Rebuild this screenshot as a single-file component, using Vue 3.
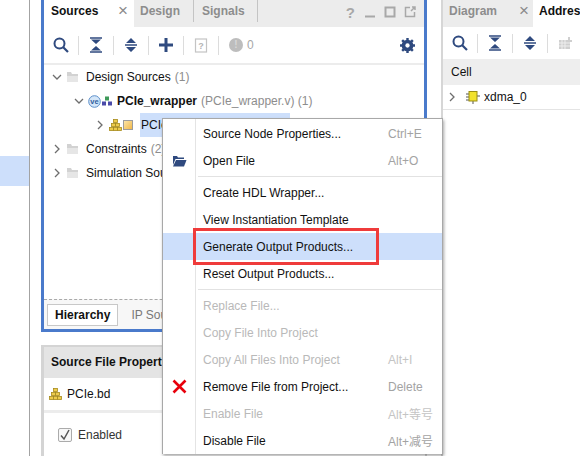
<script setup>
const iconBlue = '#2f4a7f'

const treeRows = [
  { label: 'Design Sources', note: '(1)', indent: 52, open: true, icon: 'folder' },
  { label: 'PCIe_wrapper', note: '(PCIe_wrapper.v) (1)', indent: 74, open: true, icon: 've', bold: true },
  { label: 'PCIe.bd', note: '', indent: 95, open: false, icon: 'bd', selected: true },
  { label: 'Constraints', note: '(2)', indent: 52, open: false, icon: 'folder' },
  { label: 'Simulation Sources', note: '(1)', indent: 52, open: false, icon: 'folder' },
]

const menuGroups = [
  [
    { label: 'Source Node Properties...', key: 'Ctrl+E' },
    { label: 'Open File', key: 'Alt+O', icon: 'open' },
  ],
  [
    { label: 'Create HDL Wrapper...' },
    { label: 'View Instantiation Template' },
    { label: 'Generate Output Products...', active: true },
    { label: 'Reset Output Products...' },
  ],
  [
    { label: 'Replace File...', off: true },
    { label: 'Copy File Into Project', off: true },
    { label: 'Copy All Files Into Project', key: 'Alt+I', off: true },
    { label: 'Remove File from Project...', key: 'Delete', icon: 'remove' },
    { label: 'Enable File', key: 'Alt+等号', off: true },
    { label: 'Disable File', key: 'Alt+减号' },
  ],
]

// little stack of blocks used for block design files
const stackCubes = [
  [4.5, 0.5], [2.5, 4.5], [6.5, 4.5], [0.5, 8.5], [4.5, 8.5], [8.5, 8.5],
]
</script>

<template>
  <div class="screen">
    <div class="strip">
      <div class="strip-mark"></div>
    </div>

    <div class="center">
      <section class="sources">
        <div class="tabs">
          <div class="tab tab-on">Sources<span class="close">×</span></div>
          <div class="tab">Design</div>
          <div class="tab">Signals</div>
          <div class="win-btns">
            <span class="help">?</span>
            <svg width="12" height="12" viewBox="0 0 12 12"><path d="M1 10.500h10" stroke="#a8a8a8" stroke-width="2" /></svg>
            <svg width="12" height="12" viewBox="0 0 12 12"><rect x="1.500" y="1.500" width="9" height="9" fill="none" stroke="#a8a8a8" stroke-width="2" /></svg>
            <svg width="12" height="12" viewBox="0 0 12 12"><path d="M6 1.500H1.500v9h9V6M7 5l4-4M8 1h3v3" fill="none" stroke="#a8a8a8" stroke-width="1.500" /></svg>
          </div>
        </div>

        <div class="toolbar">
          <button class="tool">
            <svg width="16" height="16" viewBox="0 0 16 16"><circle cx="6.500" cy="6.500" r="5" fill="none" :stroke="iconBlue" stroke-width="2" /><path d="M10 10l5 5" :stroke="iconBlue" stroke-width="2.200" /></svg>
          </button>
          <button class="tool">
            <svg width="14" height="16" viewBox="0 0 14 16"><path d="M1 1h12M1 15h12" :stroke="iconBlue" stroke-width="1.500" /><path d="M2 2.500h10L7 7zM2 13.500h10L7 9z" :fill="iconBlue" /></svg>
          </button>
          <button class="tool">
            <svg width="14" height="16" viewBox="0 0 14 16"><path d="M7 1l5 5H2zM7 15l-5-5h10z" :fill="iconBlue" /><path d="M1 8h12" :stroke="iconBlue" stroke-width="1.500" /></svg>
          </button>
          <button class="tool">
            <svg width="16" height="16" viewBox="0 0 16 16"><path d="M8 1v14M1 8h14" :stroke="iconBlue" stroke-width="3" /></svg>
          </button>
          <button class="tool">
            <svg width="14" height="15" viewBox="0 0 14 15"><rect x="1.500" y="1" width="11" height="13" fill="none" stroke="#c4c4c4" stroke-width="1.200" /><text x="7" y="11" font-size="9" text-anchor="middle" fill="#b4b4b4" font-family="Liberation Sans" font-weight="700">?</text></svg>
          </button>
          <div class="tool tool-last">
            <span class="dot">!</span><span class="count">0</span>
          </div>
          <svg class="gear" width="15" height="15" viewBox="0 0 16 16"><circle cx="8" cy="8" r="4.500" fill="none" :stroke="iconBlue" stroke-width="3.500" /><path d="M8 0v16M0 8h16M2.300 2.300l11.400 11.400M13.700 2.300L2.300 13.700" :stroke="iconBlue" stroke-width="2.600" /><circle cx="8" cy="8" r="2.300" fill="#fff" /></svg>
        </div>

        <div class="tree">
          <div v-for="row in treeRows" :key="row.label" class="tree-row" :style="{ paddingLeft: row.indent + 'px' }">
            <svg class="chev" width="10" height="10" viewBox="0 0 10 10">
              <path :d="row.open ? 'M1 3l4 4 4-4' : 'M3 1l4 4-4 4'" fill="none" stroke="#6e6e6e" stroke-width="1.300" />
            </svg>
            <svg v-if="row.icon === 'folder'" class="ico" width="13" height="12" viewBox="0 0 13 12">
              <path d="M1 1h4l1 2h6v8H1z" fill="#d2d2d2" /><path d="M1 5h11v6H1z" fill="#e6e6e6" />
            </svg>
            <template v-if="row.icon === 've'">
              <svg class="ico" width="13" height="13" viewBox="0 0 13 13">
                <circle cx="6.500" cy="6.500" r="5.800" fill="#d4e6f8" stroke="#5c8fca" />
                <text x="6.500" y="9" font-size="7.500" font-weight="700" text-anchor="middle" fill="#2f5f9e" font-family="Liberation Sans">ve</text>
              </svg>
              <svg class="hier" width="10" height="10" viewBox="0 0 10 10">
                <rect x="3" y="0.500" width="4" height="4" fill="#3f9a5a" /><rect x="0" y="5.500" width="4" height="4" fill="#4a4aa8" /><rect x="6" y="5.500" width="4" height="4" fill="#4a4aa8" />
              </svg>
            </template>
            <template v-if="row.icon === 'bd'">
              <svg class="ico" width="13" height="12" viewBox="0 0 13 12">
                <rect v-for="c in stackCubes" :key="c.join()" :x="c[0]" :y="c[1]" width="4" height="3" fill="#edcb4b" stroke="#a68a1c" stroke-width="0.800" />
              </svg>
              <span class="bd-box"></span>
            </template>
            <div class="tree-text" :class="{ picked: row.selected }">
              <span :class="{ strong: row.bold }">{{ row.label }}</span>
              <span v-if="row.note" class="note">{{ row.note }}</span>
            </div>
          </div>
        </div>

        <div class="bottom-tabs">
          <div class="bottom-tab bottom-on">Hierarchy</div>
          <div class="bottom-tab">IP Sources</div>
        </div>
      </section>

      <section class="props">
        <div class="props-head">Source File Properties</div>
        <div class="props-file">
          <svg width="13" height="12" viewBox="0 0 13 12">
            <rect v-for="c in stackCubes" :key="c.join()" :x="c[0]" :y="c[1]" width="4" height="3" fill="#edcb4b" stroke="#a68a1c" stroke-width="0.800" />
          </svg>
          PCIe.bd
        </div>
        <div class="props-body">
          <label class="check">
            <span class="box">
              <svg width="12" height="12" viewBox="0 0 12 12"><path d="M2 6.500l3 3.500 5-9" fill="none" stroke="#555" stroke-width="1.500" /></svg>
            </span>
            Enabled
          </label>
        </div>
      </section>
    </div>

    <section class="right">
      <div class="right-tabs">
        <div class="rtab">Diagram<span class="close">×</span></div>
        <div class="rtab rtab-on">Address Editor</div>
      </div>
      <div class="right-tools">
        <button class="tool">
          <svg width="16" height="16" viewBox="0 0 16 16"><circle cx="6.500" cy="6.500" r="5" fill="none" :stroke="iconBlue" stroke-width="2" /><path d="M10 10l5 5" :stroke="iconBlue" stroke-width="2.200" /></svg>
        </button>
        <button class="tool">
          <svg width="14" height="16" viewBox="0 0 14 16"><path d="M1 1h12M1 15h12" :stroke="iconBlue" stroke-width="1.500" /><path d="M2 2.500h10L7 7zM2 13.500h10L7 9z" :fill="iconBlue" /></svg>
        </button>
        <button class="tool">
          <svg width="14" height="16" viewBox="0 0 14 16"><path d="M7 1l5 5H2zM7 15l-5-5h10z" :fill="iconBlue" /><path d="M1 8h12" :stroke="iconBlue" stroke-width="1.500" /></svg>
        </button>
        <svg class="grid-ico" width="14" height="14" viewBox="0 0 14 14"><path d="M1 4h9V1h2v3h2v2h-2v7H1z" fill="#cfcfcf" /><path d="M1 7h11M1 10h11M4 4v9M7 4v9" stroke="#eee" /></svg>
      </div>
      <div class="cell-head">Cell</div>
      <div class="cell-row">
        <svg class="chev" width="10" height="10" viewBox="0 0 10 10"><path d="M3 1l4 4-4 4" fill="none" stroke="#6e6e6e" stroke-width="1.300" /></svg>
        <svg class="chip" width="14" height="14" viewBox="0 0 14 14">
          <path d="M0 4h3M0 7h3M0 10h3M11 6h3M7 11v3" stroke="#555" stroke-width="1" />
          <rect x="3" y="1.500" width="8" height="9.500" fill="#f2e22e" stroke="#9a8e14" />
        </svg>
        xdma_0
      </div>
    </section>

    <div class="menu">
      <template v-for="(group, i) in menuGroups" :key="i">
        <div v-if="i > 0" class="menu-sep"></div>
        <div
          v-for="item in group"
          :key="item.label"
          class="menu-item"
          :class="{ 'menu-active': item.active, 'menu-off': item.off }"
        >
          <span class="menu-ico">
            <svg v-if="item.icon === 'open'" width="15" height="12" viewBox="0 0 15 12">
              <path d="M1 1h4l1 1.500h6V4H3.500L1 10z" fill="#2f4a7f" /><path d="M4 5h10.500L12 11.500H1z" fill="#2f4a7f" />
            </svg>
            <svg v-if="item.icon === 'remove'" width="15" height="15" viewBox="0 0 15 15">
              <path d="M1.500 1.500l12 12M13.500 1.500l-12 12" stroke="#e8000c" stroke-width="2.600" />
            </svg>
          </span>
          <span class="menu-label">{{ item.label }}</span>
          <span v-if="item.key" class="menu-key">{{ item.key }}</span>
          <span v-if="item.active" class="callout"></span>
        </div>
      </template>
    </div>
  </div>
</template>

<style>
html, body { margin: 0; padding: 0; background: #fff; }
</style>

<style scoped>
.screen {
  position: relative;
  display: flex;
  width: 580px;
  height: 456px;
  overflow: hidden;
  background: #fff;
  font-family: "Liberation Sans", Arial, "Noto Sans CJK SC", sans-serif;
  font-size: 12px;
  color: #111;
}
.strip {
  width: 29px;
  flex: none;
  border-right: 1px solid #a3a3a3;
  padding-top: 156px;
  box-sizing: content-box;
}
.strip-mark { height: 30px; background: #cddffb; }

.center {
  width: 386px;
  flex: none;
  margin-left: 11px;
  display: flex;
  flex-direction: column;
  gap: 13px;
}
.sources {
  height: 332px;
  flex: none;
  box-sizing: border-box;
  border: 3px solid #4a7acb;
  border-top: 0;
  display: flex;
  flex-direction: column;
}
.tabs {
  display: flex;
  height: 27px;
  flex: none;
  background: #ececec;
  color: #8d8d8d;
  font-weight: 700;
}
.tab {
  display: flex;
  align-items: center;
  padding-left: 6px;
  width: 60px;
  box-sizing: border-box;
  border-right: 1px solid #c4c4c4;
  margin-bottom: 5px;
}
.tab:nth-child(3) { padding-left: 8px; width: 64px; }
.tab-on {
  width: 90px;
  margin-bottom: 0;
  background: #fff;
  color: #111;
  border-right: 0;
  padding: 0 6px 5px 7px;
  justify-content: space-between;
}
.close { color: #8a8a8a; font-size: 17px; font-weight: 400; line-height: 12px; }
.win-btns {
  margin-left: auto;
  display: flex;
  align-items: center;
  gap: 8px;
  padding: 0 8px 3px 0;
}
.help { font-size: 15px; font-weight: 700; color: #a8a8a8; margin-right: 1px; }

.toolbar {
  height: 36px;
  flex: none;
  display: flex;
  align-items: center;
  border-bottom: 2px solid #ececec;
  box-sizing: content-box;
}
.tool {
  width: 35px;
  height: 19px;
  display: flex;
  align-items: center;
  justify-content: center;
  padding: 0;
  background: none;
  border: 0;
  border-right: 1px solid #dcdcdc;
}
.tool-last {
  border-right: 0;
  justify-content: flex-start;
  padding-left: 10px;
  gap: 4px;
  color: #a8a8a8;
}
.dot {
  width: 14px;
  height: 14px;
  border-radius: 50%;
  background: #bdbdbd;
  color: #d8d8d8;
  font-size: 10px;
  font-weight: 700;
  text-align: center;
  line-height: 14px;
}
.count { font-size: 12px; }
.gear { margin-left: auto; margin-right: 9px; }

.tree { flex: 1; }
.tree-row {
  height: 24px;
  display: flex;
  align-items: center;
  margin-left: -44px;
}
.chev { flex: none; }
.ico { flex: none; margin-left: 4px; }
.hier { margin-left: 1px; flex: none; }
.bd-box {
  width: 10px;
  height: 10px;
  margin-left: 1px;
  background: linear-gradient(135deg, #fbe4a8, #f2b94a);
  border: 1px solid #9c9c9c;
  box-sizing: border-box;
}
.tree-text {
  margin-left: 7px;
  white-space: nowrap;
  line-height: 24px;
}
.hier + .tree-text { margin-left: 5px; }
.picked {
  background: #cddffb;
  width: 149px;
  margin-left: 7px;
  padding-left: 1px;
}
.strong { font-weight: 700; }
.note { color: #8d8d8d; margin-left: 4px; }

.bottom-tabs {
  height: 30px;
  flex: none;
  box-sizing: border-box;
  border-top: 1px dashed #a9a9a9;
  background: #f7f7f7;
  display: flex;
  align-items: center;
  padding-left: 3px;
  gap: 13px;
  color: #777;
}
.bottom-tab { line-height: 20px; }
.bottom-on {
  border: 1px solid #c8c8c8;
  background: #fff;
  color: #111;
  font-weight: 700;
  padding: 0 7px;
}

.props {
  flex: 1;
  border: 2px solid #d4d4d4;
  border-bottom: 0;
  border-left-width: 3px;
  display: flex;
  flex-direction: column;
}
.props-head {
  height: 31px;
  line-height: 31px;
  background: #e4e4e4;
  font-weight: 700;
  padding-left: 7px;
}
.props-file {
  height: 31px;
  display: flex;
  align-items: center;
  gap: 5px;
  padding: 0 0 1px 5px;
  border-bottom: 3px solid #ececec;
}
.props-body { padding: 15px 0 0 14px; }
.check { display: flex; align-items: center; gap: 6px; color: #333; }
.box {
  width: 14px;
  height: 14px;
  display: flex;
  align-items: center;
  justify-content: center;
  border: 1px solid #ababab;
  border-radius: 2px;
  background: #f7f7f7;
  box-sizing: border-box;
}

.right {
  margin-left: 14px;
  flex: 1;
  min-width: 0;
  border-left: 2px solid #d6d6d6;
  display: flex;
  flex-direction: column;
}
.right-tabs {
  display: flex;
  height: 27px;
  flex: none;
  background: #ececec;
  font-weight: 700;
  white-space: nowrap;
}
.rtab {
  display: flex;
  align-items: center;
  padding: 0 4px 5px 6px;
  color: #8d8d8d;
  width: 90px;
  flex: none;
  box-sizing: border-box;
  justify-content: space-between;
}
.rtab-on { background: #fff; color: #111; width: 130px; padding-left: 6px; }
.right-tools {
  height: 32px;
  flex: none;
  display: flex;
  align-items: center;
}
.grid-ico { margin-left: 10px; }
.cell-head {
  height: 26px;
  flex: none;
  line-height: 26px;
  background: #eee;
  padding-left: 8px;
}
.cell-row {
  height: 24px;
  flex: none;
  display: flex;
  align-items: center;
  padding-left: 4px;
  border-bottom: 1px solid #e4e4e4;
}
.chip { margin: 0 4px 0 9px; }

.menu {
  position: absolute;
  left: 162px;
  top: 118px;
  width: 279px;
  padding-top: 1px;
  background: #fff;
  border: 1px solid #a8a8a8;
  border-bottom: 0;
  box-shadow: 1px 2px 3px rgba(0, 0, 0, 0.35);
  background-image: linear-gradient(#e4e4e4, #e4e4e4);
  background-size: 1px 100%;
  background-position: 32px 0;
  background-repeat: no-repeat;
}
.menu-item {
  position: relative;
  height: 27px;
  display: flex;
  align-items: center;
  white-space: nowrap;
}
.menu-active { background-color: #cddffb; }
.menu-off { color: #b9b9b9; }
.menu-ico {
  width: 33px;
  flex: none;
  display: flex;
  justify-content: center;
}
.menu-label { margin-left: 7px; }
.menu-key {
  position: absolute;
  left: 225px;
  color: #a3a3a3;
}
.menu-off .menu-key { color: #c4c4c4; }
.menu-sep {
  height: 1px;
  margin: 2px 0 2px 35px;
  background: #e2e2e2;
}
.callout {
  position: absolute;
  left: 30px;
  top: -5px;
  width: 186px;
  height: 37px;
  box-sizing: border-box;
  border: 3px solid #ef3b3b;
}
</style>
